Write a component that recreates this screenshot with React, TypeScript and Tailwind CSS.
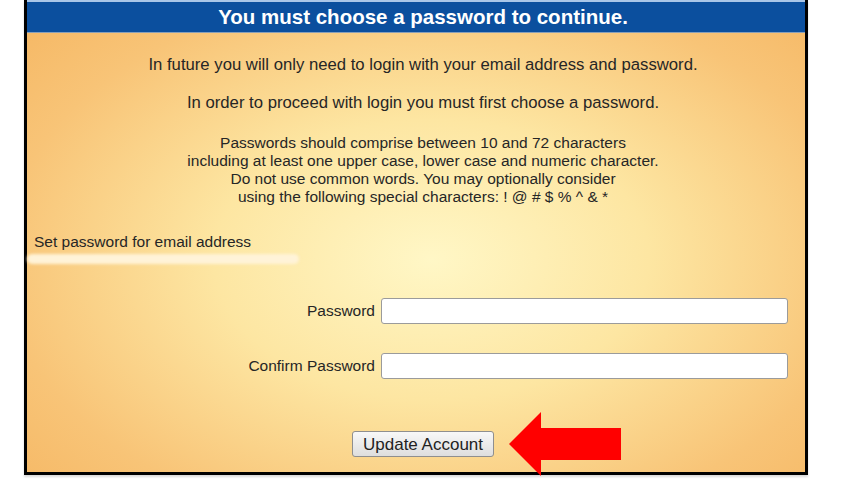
export default function App() {
  return (
    <div className="relative h-[489px] w-[846px] overflow-hidden bg-white font-['Liberation_Sans',Arial,sans-serif] text-[#262626]">
      <div className="ml-[24px] h-[475px] w-[784px] border-x-[3px] border-b-[3px] border-black bg-[radial-gradient(ellipse_at_52%_55%,#fff7c6_0%,#fde6a2_38%,#f8c477_75%,#f5b662_100%)] shadow-[0_2px_2px_rgba(0,0,0,0.15)]">
        {/* Header */}
        <div className="flex h-[33px] items-center justify-center border-t-2 border-[#a9c6e8] border-b border-b-[#8aa0b8] bg-[#0b4f9e] pl-[14px] text-[20.5px] font-bold text-white">
          You must choose a password to continue.
        </div>

        {/* Intro text */}
        <div className="pl-[14px] text-center">
          <p className="mt-[23px] text-[16.7px] leading-[18px]">
            In future you will only need to login with your email address and password.
          </p>
          <p className="mt-[20px] text-[16.7px] leading-[18px]">
            In order to proceed with login you must first choose a password.
          </p>
          <div className="mt-[22px] text-[15.5px] leading-[18px]">
            <p>Passwords should comprise between 10 and 72 characters</p>
            <p>including at least one upper case, lower case and numeric character.</p>
            <p>Do not use common words. You may optionally consider</p>
            <p>using the following special characters: ! @ # $ % ^ &amp; *</p>
          </div>
        </div>

        <p className="mt-[27px] pl-[7px] text-[15.5px] leading-[18px]">Set password for email address</p>
        <div className="mt-[3px] h-[10px] w-[272px] rounded-full bg-[#fff3d8] blur-[1.5px]" />

        {/* Form */}
        <div className="mt-[34px] flex items-center">
          <label className="w-[348px] text-right text-[15.5px]">Password</label>
          <input
            type="password"
            className="ml-[6px] h-[26px] w-[407px] rounded-[3px] border border-[#9b9b9b] bg-white outline-none"
          />
        </div>
        <div className="mt-[29px] flex items-center">
          <label className="w-[348px] text-right text-[15.5px]">Confirm Password</label>
          <input
            type="password"
            className="ml-[6px] h-[26px] w-[407px] rounded-[3px] border border-[#9b9b9b] bg-white outline-none"
          />
        </div>

        <div className="mt-[52px] flex justify-center pl-[14px]">
          <button className="h-[26px] w-[142px] rounded-[3px] border border-[#8f8f8f] bg-gradient-to-b from-[#f8f8f8] to-[#dedede] text-[17px] leading-none text-[#222]">
            Update Account
          </button>
        </div>
      </div>

      {/* Red arrow */}
      <svg className="absolute left-0 top-0" width="846" height="489" viewBox="0 0 846 489">
        <polygon points="509,444 541,412 541,428 621,428 621,460 541,460 541,476" fill="#ff0000" />
      </svg>
    </div>
  )
}
